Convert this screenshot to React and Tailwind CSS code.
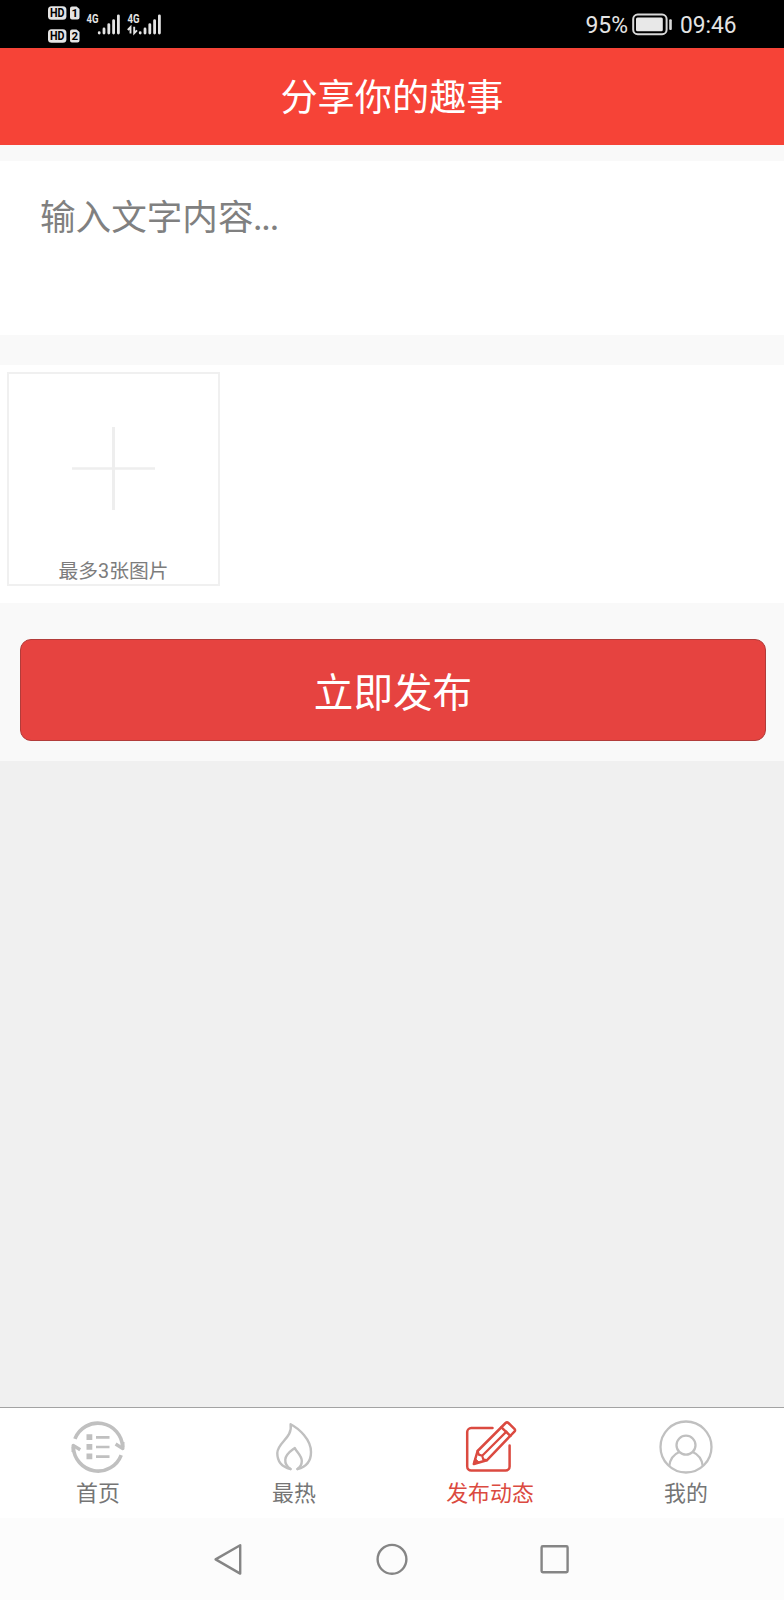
function HdBadge({ sim }) {
  return (
    <div className="flex gap-[3px]">
      <svg width="19" height="14" viewBox="0 0 19 14">
        <rect x="0" y="0.3" width="18.4" height="13.4" rx="3.5" fill="#e4e4e4" />
        <text x="9.3" y="11.2" textAnchor="middle" fontSize="12" fontWeight="700" textLength="14.5" lengthAdjust="spacingAndGlyphs" fill="#000">HD</text>
      </svg>
      <svg width="10" height="14" viewBox="0 0 10 14">
        <path d="M2 .5h4.5L9.5 3v8.5a2 2 0 0 1-2 2H2a2 2 0 0 1-2-2v-9a2 2 0 0 1 2-2z" fill="#e4e4e4" />
        <text x="4.7" y="11.3" textAnchor="middle" fontSize="11.5" fontWeight="700" fill="#000">{sim}</text>
      </svg>
    </div>
  );
}

function Signal({ data }) {
  return (
    <svg width="36" height="32" viewBox="0 -4 36 32">
      <text x="0.5" y="11" fontSize="12.5" fontWeight="700" textLength="12" lengthAdjust="spacingAndGlyphs" fill="#e4e4e4">4G</text>
      <g stroke="#e4e4e4" strokeWidth="2.8" strokeLinecap="round">
        <path d="M13.2 20.7v.4M18 17v4.1M22.8 12.6v8.5M27.6 8.6v12.5M32.4 3.8v17.3" />
      </g>
      {data && (
        <path d="M.8 18l2.7-2.8v6.4M7.2 14.8v6.4l2.8-2.8" fill="none" stroke="#e4e4e4" strokeWidth="1.9" />
      )}
    </svg>
  );
}

function StatusBar() {
  return (
    <div className="flex h-12 shrink-0 items-center justify-between bg-black pl-[47.5px] pr-11 font-['Roboto',sans-serif] text-[#e4e4e4]">
      <div className="flex items-center">
        <div className="flex flex-col gap-[9px]">
          <HdBadge sim="1" />
          <HdBadge sim="2" />
        </div>
        <div className="flex gap-[5px] pl-[6px]">
          <Signal />
          <Signal data />
        </div>
      </div>
      <div className="flex items-center pt-[2px]">
        <svg width="49" height="32" viewBox="0 0 49 32">
          <text x="2.5" y="24" fontSize="24" textLength="42.5" lengthAdjust="spacingAndGlyphs" fill="#e4e4e4">95%</text>
        </svg>
        <svg width="41" height="24" viewBox="0 0 41 24">
          <rect x="1.2" y="1.6" width="33.4" height="19.6" rx="4.5" fill="none" stroke="#d8d8d8" strokeWidth="2" />
          <rect x="4" y="4.6" width="26.8" height="13.6" rx="1.5" fill="#e8e8e8" />
          <rect x="37.2" y="6.2" width="2.6" height="10.8" rx="1" fill="#d8d8d8" />
        </svg>
        <svg className="ml-[3px]" width="64" height="32" viewBox="0 0 64 32">
          <text x="4" y="24" fontSize="24" textLength="56.5" lengthAdjust="spacingAndGlyphs" fill="#e4e4e4">09:46</text>
        </svg>
      </div>
    </div>
  );
}

function HomeIcon() {
  return (
    <svg width="56" height="56" viewBox="0 0 56 56" fill="none" stroke="#c0c0c0">
      <path d="M4.9 19.9A24.7 24.7 0 0 1 52.6 28" strokeWidth="3.6" />
      <path d="M51.2 36.1A24.7 24.7 0 0 1 3.4 28" strokeWidth="3.6" />
      <path d="M52.8 23v6.6l-7.2-4.6" strokeWidth="3.4" strokeLinejoin="round" />
      <path d="M3.2 33v-6.6l7 4.4" strokeWidth="3.4" strokeLinejoin="round" />
      <path d="M16.5 15.2h5.8v5.8h-5.8zM16.5 24.9h5.8v5.8h-5.8zM16.5 34.5h5.8v5.8h-5.8z" fill="#c0c0c0" stroke="none" />
      <path d="M26 18.4h13.5M26 28h13.5M26 37.6h13.5" strokeWidth="2.6" />
    </svg>
  );
}

function FireIcon() {
  return (
    <svg width="56" height="56" viewBox="0 0 56 56" fill="none" stroke="#c0c0c0" strokeWidth="2.4" strokeLinejoin="round" strokeLinecap="round">
      <path d="M24.5 50C16 48 11.3 42 11.3 34C11.3 23.5 27 19 24.6 5.2C33 9.5 45 20.5 45 33C45 42 40 48 31.5 50" />
      <path d="M24.5 50C20.5 47.5 19 44 19.3 40.5C19.9 34.5 25 32 28.8 29C30.6 33 35.8 36.5 35.8 42C35.8 45.5 34.2 48.2 31.5 50" />
    </svg>
  );
}

function EditIcon() {
  return (
    <svg width="56" height="56" viewBox="0 0 56 56" fill="none" stroke="#db4a40" strokeWidth="2.5" strokeLinejoin="round" strokeLinecap="round">
      <path d="M30.5 9.1H9.2a4 4 0 0 0-4 4v34.4a4 4 0 0 0 4 4h34.4a4 4 0 0 0 4-4V26.5" />
      <path d="M15.6 32L43.6 4q1.4-1.3 2.8 0l6 5.8q1.4 1.4 0 2.8L24.8 41.3L11.8 45z" />
      <path d="M15.6 32l1.2 3.6 3.4 1.2 1 3.4 3.6 1.1M20.2 36.8L44.4 12.6" strokeWidth="2.2" />
      <path d="M39.4 8.3l9 8.6" />
      <path d="M13.2 39.5l4 3.8-5.4 1.8z" fill="#db4a40" strokeWidth="1" />
    </svg>
  );
}

function UserIcon() {
  return (
    <svg width="56" height="56" viewBox="0 0 56 56" fill="none" stroke="#c0c0c0" strokeWidth="2.3">
      <circle cx="28" cy="28" r="25.5" />
      <circle cx="28" cy="26.2" r="9.5" />
      <path d="M11.2 47.2C12 40.5 15.8 35.3 21.3 33M34.7 33C40.2 35.3 44 40.5 44.8 47.2" />
    </svg>
  );
}

const tabs = [
  { label: '首页', icon: HomeIcon },
  { label: '最热', icon: FireIcon },
  { label: '发布动态', icon: EditIcon, active: true },
  { label: '我的', icon: UserIcon },
];

export default function App() {
  return (
    <div className="flex h-[1600px] w-[784px] flex-col overflow-hidden bg-[#f0f0f0] font-['Roboto','Noto_Sans_CJK_SC',sans-serif]">
      <StatusBar />

      <header className="flex h-[97px] shrink-0 items-center justify-center bg-[#f64337] pt-[5px] text-[37.2px] leading-none text-white">
        分享你的趣事
      </header>

      <main className="flex flex-col bg-[#f9f9f9] pt-4">
        <textarea
          placeholder="输入文字内容..."
          className="block h-[174px] w-full resize-none bg-white px-10 pt-[30px] font-['Lato','Noto_Sans_CJK_SC',sans-serif] text-[35.6px] leading-[52px] outline-none placeholder:text-[#808080]"
        />

        {/* Image upload */}
        <section className="mt-[30px] h-[238px] bg-white pl-[7px] pt-[7px]">
          <div className="flex h-[214px] w-[213px] flex-col items-center border-2 border-[#f0f0f0]">
            <svg className="mt-[53px] shrink-0" width="83" height="84" viewBox="0 0 83 84" stroke="#eeeeee">
              <path d="M41.5 0v83" strokeWidth="3" />
              <path d="M0 41.5h83" strokeWidth="2.4" />
            </svg>
            <span className="mt-[49px] text-[19.8px] leading-[24px] text-[#7c7c7c]">最多3张图片</span>
          </div>
        </section>

        <div className="pb-5 pl-5 pr-[18px] pt-[36px]">
          <button className="block h-[102px] w-full rounded-[11px] border border-[#b23c3a] bg-[#e64340] pt-[7px] text-[39.6px] leading-none text-white">
            立即发布
          </button>
        </div>
      </main>

      {/* Bottom tabs */}
      <nav className="mt-auto flex h-[111px] shrink-0 border-t border-[#a3a3a3] bg-white">
        {tabs.map(({ label, icon: Icon, active }) => (
          <div key={label} className="flex flex-1 flex-col items-center pt-[11px]">
            <Icon />
            <span className={`mt-[6px] text-[21.9px] leading-[26px] ${active ? 'text-[#db4a40]' : 'text-[#757575]'}`}>
              {label}
            </span>
          </div>
        ))}
      </nav>

      {/* System navigation */}
      <div className="flex h-[82px] shrink-0 justify-center gap-[131px] bg-[#fcfcfc] pt-[25px]">
        <svg width="32" height="32" viewBox="0 0 32 32" fill="none" stroke="#858585" strokeWidth="2.4" strokeLinejoin="round">
          <path d="M27.2 2.2v28.4L2.6 16.4z" />
        </svg>
        <svg width="32" height="32" viewBox="0 0 32 32" fill="none" stroke="#858585" strokeWidth="2.4">
          <circle cx="16" cy="16.3" r="14.4" />
        </svg>
        <svg width="32" height="32" viewBox="0 0 32 32" fill="none" stroke="#858585" strokeWidth="2.4">
          <rect x="2.6" y="3.2" width="26" height="26" rx="1.2" />
        </svg>
      </div>
    </div>
  );
}
